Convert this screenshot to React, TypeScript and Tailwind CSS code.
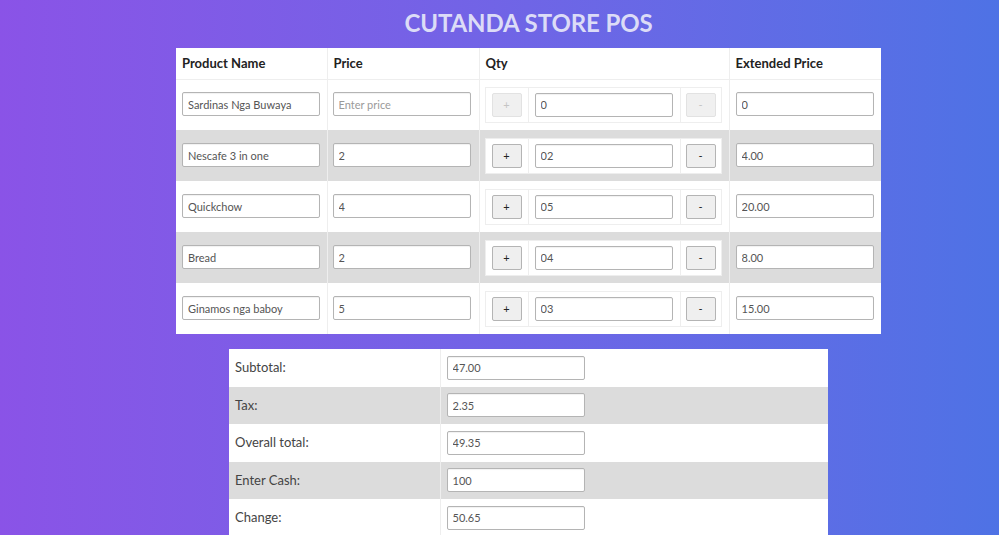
import React from 'react';

type Item = {
  name: string;
  price: string;
  qty: string;
  ext: string;
  disabled?: boolean;
};

const items: Item[] = [
  { name: 'Sardinas Nga Buwaya', price: '', qty: '0', ext: '0', disabled: true },
  { name: 'Nescafe 3 in one', price: '2', qty: '02', ext: '4.00' },
  { name: 'Quickchow', price: '4', qty: '05', ext: '20.00' },
  { name: 'Bread', price: '2', qty: '04', ext: '8.00' },
  { name: 'Ginamos nga baboy', price: '5', qty: '03', ext: '15.00' },
];

const totals = [
  { label: 'Subtotal:', value: '47.00' },
  { label: 'Tax:', value: '2.35' },
  { label: 'Overall total:', value: '49.35' },
  { label: 'Enter Cash:', value: '100', focused: true },
  { label: 'Change:', value: '50.65' },
];

const inputCls =
  'block w-[138px] h-[24px] px-[5px] text-[11px] text-[#555] bg-white border border-[#b4b4b4] rounded-[2px] shadow-[inset_0_1px_1px_rgba(0,0,0,0.06)] outline-none placeholder:text-[#9a9a9a]';

const QtyButton: React.FC<{ label: string; disabled?: boolean }> = ({ label, disabled }) => (
  <button
    className={`w-[30px] h-[24px] rounded-[2px] border text-[11px] leading-none ${
      disabled ? 'bg-[#f0f0f0] border-[#e2e2e2] text-[#c4c4c4]' : 'bg-[#efefef] border-[#b4b4b4] text-[#222]'
    }`}
  >
    {label}
  </button>
);

export default function App() {
  return (
    <div className="min-h-screen w-full bg-gradient-to-r from-[#8a53e7] to-[#4e72e5] font-['Lato',sans-serif] pl-[58px] pb-8">
      <h1 className="h-[48px] pt-[5px] text-center text-[24px] font-bold tracking-[-0.1px] text-[#dcdcf7]">
        CUTANDA STORE POS
      </h1>

      {/* Products */}
      <table className="mx-auto w-[705px] bg-white border-collapse table-fixed">
        <colgroup>
          <col className="w-[151px]" />
          <col className="w-[152px]" />
          <col className="w-[250px]" />
          <col className="w-[152px]" />
        </colgroup>
        <thead>
          <tr className="h-[31px] text-left text-[13px] font-bold text-[#222]">
            <th className="px-[6px] border-r border-b border-[#eeeeee]">Product Name</th>
            <th className="px-[6px] border-r border-b border-[#eeeeee]">Price</th>
            <th className="px-[6px] border-r border-b border-[#eeeeee]">Qty</th>
            <th className="px-[6px] border-b border-[#eeeeee]">Extended Price</th>
          </tr>
        </thead>
        <tbody>
          {items.map((it, i) => (
            <tr key={it.name} className={`h-[51px] ${i % 2 === 1 ? 'bg-[#dcdcdc]' : ''}`}>
              <td className="pl-[6px] pb-[1px] border-r border-[#eeeeee]">
                <input className={inputCls} defaultValue={it.name} />
              </td>
              <td className="pl-[5px] pb-[1px] border-r border-[#eeeeee]">
                <input className={inputCls} defaultValue={it.price} placeholder="Enter price" />
              </td>
              <td className="pl-[5px] border-r border-[#eeeeee]">
                <div className="flex w-[237px] h-[36px] bg-white border border-[#eeeeee]">
                  <div className="flex items-center justify-center w-[43px] border-r border-[#eeeeee]">
                    <QtyButton label="+" disabled={it.disabled} />
                  </div>
                  <div className="flex items-center pl-[6px] w-[152px] border-r border-[#eeeeee]">
                    <input className={inputCls} defaultValue={it.qty} />
                  </div>
                  <div className="flex items-center justify-center flex-1">
                    <QtyButton label="-" disabled={it.disabled} />
                  </div>
                </div>
              </td>
              <td className="pl-[6px] pb-[1px]">
                <input className={inputCls} defaultValue={it.ext} />
              </td>
            </tr>
          ))}
        </tbody>
      </table>

      {/* Totals */}
      <table className="mx-auto mt-[15px] w-[599px] bg-white border-collapse table-fixed">
        <colgroup>
          <col className="w-[211px]" />
          <col />
        </colgroup>
        <tbody>
          {totals.map((t, i) => (
            <tr key={t.label} className={`h-[37.5px] ${i % 2 === 1 ? 'bg-[#dcdcdc]' : ''}`}>
              <td className="px-[6px] text-[13px] text-[#444] border-r border-[#eeeeee]">{t.label}</td>
              <td className="pl-[6px]">
                <input
                  className={`${inputCls} ${t.focused ? 'border-[#333] text-[#222]' : ''}`}
                  defaultValue={t.value}
                />
              </td>
            </tr>
          ))}
        </tbody>
      </table>
    </div>
  );
}
